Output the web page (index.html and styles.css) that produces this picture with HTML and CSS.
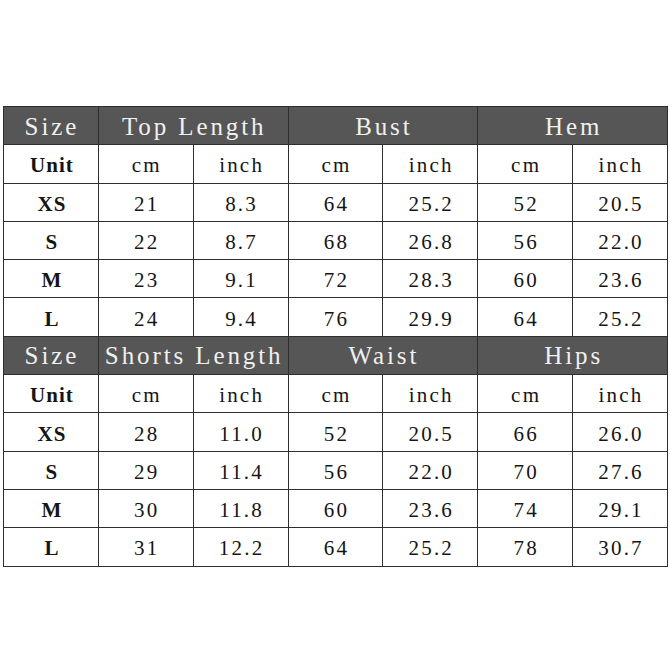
FILE: index.html
```html
<!DOCTYPE html>
<html>
<head>
<meta charset="utf-8">
<link rel="stylesheet" href="styles.css">
</head>
<body>
<table class="chart">
  <tr class="head"><td>Size</td><td colspan="2">Top Length</td><td colspan="2">Bust</td><td colspan="2">Hem</td></tr>
  <tr><td class="lbl">Unit</td><td>cm</td><td>inch</td><td>cm</td><td>inch</td><td>cm</td><td>inch</td></tr>
  <tr><td class="lbl">XS</td><td>21</td><td>8.3</td><td>64</td><td>25.2</td><td>52</td><td>20.5</td></tr>
  <tr><td class="lbl">S</td><td>22</td><td>8.7</td><td>68</td><td>26.8</td><td>56</td><td>22.0</td></tr>
  <tr><td class="lbl">M</td><td>23</td><td>9.1</td><td>72</td><td>28.3</td><td>60</td><td>23.6</td></tr>
  <tr><td class="lbl">L</td><td>24</td><td>9.4</td><td>76</td><td>29.9</td><td>64</td><td>25.2</td></tr>
  <tr class="head"><td>Size</td><td colspan="2">Shorts Length</td><td colspan="2">Waist</td><td colspan="2">Hips</td></tr>
  <tr><td class="lbl">Unit</td><td>cm</td><td>inch</td><td>cm</td><td>inch</td><td>cm</td><td>inch</td></tr>
  <tr><td class="lbl">XS</td><td>28</td><td>11.0</td><td>52</td><td>20.5</td><td>66</td><td>26.0</td></tr>
  <tr><td class="lbl">S</td><td>29</td><td>11.4</td><td>56</td><td>22.0</td><td>70</td><td>27.6</td></tr>
  <tr><td class="lbl">M</td><td>30</td><td>11.8</td><td>60</td><td>23.6</td><td>74</td><td>29.1</td></tr>
  <tr><td class="lbl">L</td><td>31</td><td>12.2</td><td>64</td><td>25.2</td><td>78</td><td>30.7</td></tr>
</table>
</body>
</html>
```
FILE: styles.css
```css
html, body {
  margin: 0;
  background: #ffffff;
}
body {
  padding: 106px 0 0 3px;
}
.chart {
  border-collapse: collapse;
  table-layout: fixed;
  width: 665px;
  font-family: "Liberation Serif", "DejaVu Serif", serif;
  color: #151515;
}
.chart td {
  border: 1.5px solid #2e2e2e;
  height: 38.3px;
  box-sizing: border-box;
  padding: 4px 0 0 2px;
  text-align: center;
  vertical-align: middle;
  font-size: 21px;
  letter-spacing: 2.2px;
  white-space: nowrap;
  overflow: visible;
}
.chart .head td {
  background: #565656;
  color: #f0f0f0;
  font-size: 25px;
  letter-spacing: 2.9px;
  padding-top: 2px;
}
.chart .lbl {
  font-weight: bold;
  letter-spacing: 1px;
}
```
